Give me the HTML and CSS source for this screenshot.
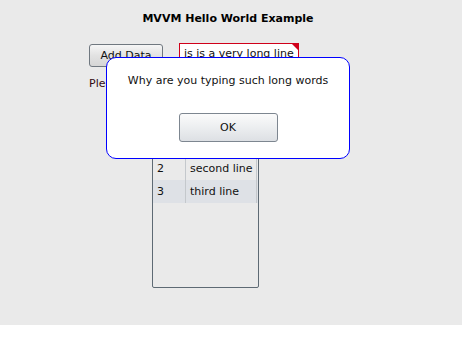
FILE: index.html
```html
<!DOCTYPE html>
<html>
<head>
<meta charset="utf-8">
<link rel="stylesheet" href="styles.css">
</head>
<body>
<div class="window">
  <h1 class="title">MVVM Hello World Example</h1>
  <div class="toolbar">
    <button class="btn add">Add Data</button>
    <div class="textbox">is is a very long line</div>
  </div>
  <div class="label">Please enter some text</div>
  <div class="list">
    <div class="row"><div class="cell num">1</div><div class="cell txt">first line</div></div>
    <div class="row"><div class="cell num">2</div><div class="cell txt">second line</div></div>
    <div class="row alt"><div class="cell num">3</div><div class="cell txt">third line</div></div>
  </div>
  <div class="dialog">
    <div class="msg">Why are you typing such long words</div>
    <button class="btn ok">OK</button>
  </div>
</div>
</body>
</html>
```
FILE: styles.css
```css
html, body { margin: 0; padding: 0; background: #ffffff; }
body { font-family: "DejaVu Sans", Tahoma, sans-serif; font-size: 11px; color: #111; }
.window {
  position: relative;
  width: 462px;
  height: 325px;
  background: #eaeaea;
  overflow: hidden;
}
.title {
  margin: 0;
  padding: 12px 6px 0 0;
  font-size: 11px;
  line-height: 14px;
  font-weight: bold;
  text-align: center;
  color: #000;
}
.toolbar {
  display: flex;
  align-items: flex-start;
  gap: 16px;
  margin-top: 17px;
  padding-left: 89px;
}
.btn {
  font-family: inherit;
  font-size: 11px;
  color: #111;
  border: 1px solid #707880;
  border-radius: 3px;
  background: linear-gradient(#f6f6f6, #e2e2e2 50%, #d6d6d6);
  padding: 0;
  box-sizing: border-box;
}
.add { width: 74px; height: 23px; margin-top: 1px; }
.textbox {
  position: relative;
  width: 120px;
  height: 22px;
  box-sizing: border-box;
  border: 1px solid #d0001a;
  background: #fff;
  padding: 3px 0 0 4px;
  line-height: 14px;
  white-space: nowrap;
  overflow: hidden;
}
.textbox::after {
  content: "";
  position: absolute;
  top: 0;
  right: 0;
  border-top: 6px solid #d0001a;
  border-left: 6px solid transparent;
}
.label {
  margin-top: 10px;
  padding-left: 89px;
  line-height: 14px;
  color: #330a14;
}
.list {
  margin: 41px 0 0 152px;
  width: 107px;
  height: 156px;
  box-sizing: border-box;
  border: 1px solid #5e6a74;
  border-radius: 2px;
  padding-top: 1px;
}
.row {
  display: grid;
  grid-template-columns: 33px 71px;
  height: 23px;
}
.row.alt { background: #dee1e6; }
.cell {
  border-right: 1px solid #c4c8cc;
  line-height: 23px;
  padding-left: 4px;
  white-space: nowrap;
  overflow: hidden;
}
.dialog {
  position: absolute;
  left: 106px;
  top: 57px;
  width: 244px;
  height: 102px;
  box-sizing: border-box;
  border: 1px solid #0000ff;
  border-radius: 10px;
  background: #fff;
  display: flex;
  flex-direction: column;
  align-items: center;
  padding-top: 16px;
}
.msg { line-height: 14px; color: #111; }
.ok {
  margin-top: 25px;
  width: 99px;
  height: 29px;
  background: linear-gradient(#fbfbfb, #eceef0 50%, #dde0e4);
  border-color: #7d8690;
}
```
